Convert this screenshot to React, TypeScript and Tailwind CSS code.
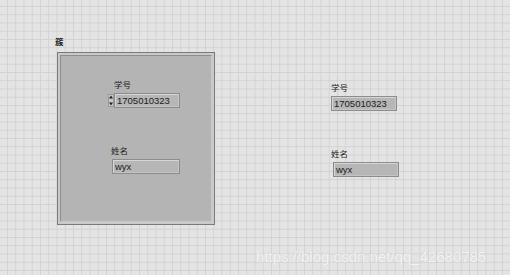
import React from "react";

const font = { fontFamily: '"Liberation Sans", "Noto Sans CJK SC", sans-serif' };

function Field({ value, className = "" }: { value: string; className?: string }) {
  return (
    <div className={`h-[15px] border border-[#8c8c8c] bg-[#b6b6b6] ${className}`}>
      <div className="h-full w-full border-t border-l border-[#d6d6d6] border-r border-b border-r-[#c4c4c4] border-b-[#c4c4c4] pl-[1px] text-[9.5px] leading-[12px] text-[#202020]">
        {value}
      </div>
    </div>
  );
}

function Label({ text, className = "" }: { text: string; className?: string }) {
  return <div className={`h-[10px] text-[8.5px] leading-[10px] text-[#1a1a1a] ${className}`}>{text}</div>;
}

export default function App() {
  return (
    <div
      className="relative h-[275px] w-[510px] overflow-hidden bg-[#e4e4e4]"
      style={{
        ...font,
        backgroundImage:
          "linear-gradient(to right, #d2d2d2 1px, transparent 1px), linear-gradient(to bottom, #d2d2d2 1px, transparent 1px)",
        backgroundSize: "8.25px 8.25px",
        backgroundPosition: "7px 6px",
      }}
    >
      {/* cluster control on the front panel canvas */}
      <div className="absolute left-[55px] top-[37px] flex flex-col">
        <Label text="簇" className="font-bold" />
        <div className="ml-[2px] mt-[5px] h-[173px] w-[158px] border border-[#7a7a7a] bg-[#cacaca] p-[2px]">
          <div className="h-full w-full border border-[#8e8e8e] border-b-[#c8c8c8] border-r-[#c8c8c8] bg-[#b4b4b4] pl-[47px] pt-[24px]">
            <div className="flex flex-col items-start gap-[3px]">
              <Label text="学号" className="ml-[6px]" />
              <div className="flex items-start">
                <div className="mt-[1px] flex h-[13px] w-[6px] flex-col items-center justify-between border border-[#9a9a9a] bg-[#c8c8c8]">
                  <svg width="4" height="4" viewBox="0 0 4 4"><path d="M0 3.5 L2 0.5 L4 3.5 Z" fill="#222" /></svg>
                  <svg width="4" height="4" viewBox="0 0 4 4"><path d="M0 0.5 L2 3.5 L4 0.5 Z" fill="#222" /></svg>
                </div>
                <Field value="1705010323" className="w-[66px]" />
              </div>
              <Label text="姓名" className="ml-[3px] mt-[35px]" />
              <Field value="wyx" className="ml-[4px] w-[68px]" />
            </div>
          </div>
        </div>
      </div>

      {/* unbundled indicators */}
      <div className="absolute left-[331px] top-[83px] flex flex-col items-start gap-[3px]">
        <Label text="学号" />
        <Field value="1705010323" className="w-[66px]" />
        <Label text="姓名" className="mt-[35px]" />
        <Field value="wyx" className="ml-[2px] w-[66px]" />
      </div>

      <div className="absolute left-[256px] top-[248px] text-[15px] leading-[18px] text-white/80 [text-shadow:0_0_1px_rgba(0,0,0,0.15)]">
        https://blog.csdn.net/qq_42680785
      </div>
    </div>
  );
}
